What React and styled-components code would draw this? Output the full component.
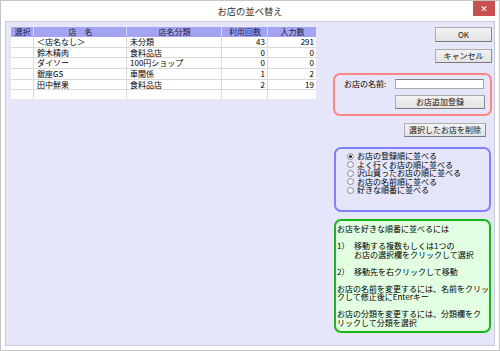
import React from "react";
import styled, { createGlobalStyle } from "styled-components";

const Global = createGlobalStyle`
  html, body { margin: 0; padding: 0; background: #fff; }
  body { font-family: "Noto Sans CJK JP", "Noto Sans", sans-serif; color: #000; }
`;

const Window = styled.div`
  width: 500px;
  height: 351px;
  box-sizing: border-box;
  border: 1px solid #c4c4c4;
  background: #fff;
  display: flex;
  flex-direction: column;
`;

const TitleBar = styled.div`
  height: 20px;
  display: grid;
  grid-template-columns: 1fr auto 1fr;
  align-items: center;
`;

const Title = styled.div`
  font-size: 9.3px;
  color: #333;
  line-height: 1;
  padding-top: 1px;
`;

const Close = styled.div`
  justify-self: end;
  align-self: start;
  width: 22px;
  height: 15px;
  margin-right: 4px;
  background: #c75050;
  color: #fff;
  font-family: "DejaVu Sans", sans-serif;
  font-size: 9px;
  font-weight: bold;
  display: flex;
  align-items: center;
  justify-content: center;
`;

const Panel = styled.div`
  flex: 1;
  margin: 0 4px 4px 4px;
  border: 1px solid #cbcbd9;
  background: #e6e6fa;
  display: flex;
  justify-content: space-between;
  align-items: flex-start;
  padding: 5px 2px 0 5px;
`;

const Grid = styled.div`
  width: 305px;
  background: #fff;
  display: grid;
  grid-template-columns: 23px 93px 95px 46px 48px;
  grid-template-rows: 10px repeat(5, 10.7px) 9px;
  font-size: 8px;
  line-height: 1;
`;

const Cell = styled.div`
  box-sizing: border-box;
  display: flex;
  align-items: center;
  justify-content: ${(p) => (p.$align === "right" ? "flex-end" : p.$align === "center" ? "center" : "flex-start")};
  padding: 0 2px 0 3px;
  white-space: nowrap;
  overflow: hidden;
  background: ${(p) => (p.$header ? "#a3a3f2" : "#fff")};
  color: ${(p) => (p.$header ? "#1a1a40" : "#000")};
  border-right: ${(p) => (p.$last ? "none" : p.$header ? "1px solid #d4d4ff" : "1px solid #dadada")};
  border-bottom: ${(p) => (p.$header || p.$end ? "none" : "1px solid #dadada")};
`;

const Side = styled.div`
  width: 159px;
  display: flex;
  flex-direction: column;
  align-items: flex-end;
`;

const Button = styled.div`
  box-sizing: border-box;
  width: ${(p) => p.$w}px;
  height: ${(p) => p.$h || 14}px;
  margin: ${(p) => p.$m || "0"};
  border: 1px solid #adadad;
  border-right-color: #8a8a8a;
  border-bottom-color: #7a7a7a;
  background: linear-gradient(#f2f2f2, #e3e3e3);
  font-size: 8px;
  line-height: 1;
  color: #111;
  display: flex;
  align-items: center;
  justify-content: center;
  white-space: nowrap;
`;

const Box = styled.div`
  box-sizing: border-box;
  align-self: stretch;
  height: ${(p) => p.$h}px;
  margin: ${(p) => p.$m || "0"};
  border: 2px solid ${(p) => p.$border};
  border-radius: 7px;
  background: ${(p) => p.$bg || "transparent"};
  padding: ${(p) => p.$pad || "0"};
  font-size: 8px;
  line-height: 8.5px;
`;

const NameGrid = styled.div`
  display: grid;
  grid-template-columns: 1fr 90px;
  row-gap: 6px;
  align-items: center;
`;

const Label = styled.div`
  white-space: nowrap;
`;

const Input = styled.div`
  box-sizing: border-box;
  width: 89px;
  height: 10px;
  background: #fff;
  border: 1px solid #a8a8a8;
  border-top-color: #7f7f7f;
`;

const RadioList = styled.div`
  display: flex;
  flex-direction: column;
`;

const RadioRow = styled.div`
  display: flex;
  align-items: center;
  height: 8.5px;
  white-space: nowrap;
`;

const RadioDot = styled.span`
  box-sizing: border-box;
  width: 7px;
  height: 7px;
  border-radius: 50%;
  border: 1px solid #8d8d8d;
  background: #f4f4f4;
  margin-right: 3px;
  display: flex;
  align-items: center;
  justify-content: center;
  &::after {
    content: "";
    width: 3px;
    height: 3px;
    border-radius: 50%;
    background: ${(p) => (p.$on ? "#222" : "transparent")};
  }
`;

const Para = styled.div`
  white-space: nowrap;
  & + & { margin-top: 8.5px; }
`;

const Step = styled.div`
  display: grid;
  grid-template-columns: 17px auto;
  white-space: nowrap;
`;

const rows = [
  ["＜店名なし＞", "未分類", 43, 291],
  ["鈴木精肉", "食料品店", 0, 0],
  ["ダイソー", "100円ショップ", 0, 0],
  ["銀座GS", "車関係", 1, 2],
  ["田中鮮果", "食料品店", 2, 19],
  ["", "", "", ""],
];

const radios = [
  "お店の登録順に並べる",
  "よく行くお店の順に並べる",
  "沢山買ったお店の順に並べる",
  "お店の名前順に並べる",
  "好きな順番に並べる",
];

export default function App() {
  return (
    <>
      <Global />
      <Window>
        <TitleBar>
          <span />
          <Title>お店の並べ替え</Title>
          <Close>✕</Close>
        </TitleBar>
        <Panel>
          <Grid>
            <Cell $header $align="center">選択</Cell>
            <Cell $header $align="center">店　名</Cell>
            <Cell $header $align="center">店名分類</Cell>
            <Cell $header $align="center">利用回数</Cell>
            <Cell $header $align="center" $last>入力数</Cell>
            {rows.map((r, i) => {
              const end = i === rows.length - 1;
              return (
                <React.Fragment key={i}>
                  <Cell $end={end} />
                  <Cell $end={end}>{r[0]}</Cell>
                  <Cell $end={end}>{r[1]}</Cell>
                  <Cell $end={end} $align="right">{r[2]}</Cell>
                  <Cell $end={end} $align="right" $last>{r[3]}</Cell>
                </React.Fragment>
              );
            })}
          </Grid>
          <Side>
            <Button $w={57} $h={15} $m="0 0 7px 0">OK</Button>
            <Button $w={57} $h={14} $m="0 0 10px 0">キャンセル</Button>
            <Box $h={43} $border="#ff8585" $pad="4px 5px 0 9px">
              <NameGrid>
                <Label>お店の名前:</Label>
                <Input />
                <span />
                <Button $w={90} $h={14}>お店追加登録</Button>
              </NameGrid>
            </Box>
            <Button $w={82} $h={14} $m="7px 6px 0 0">選択したお店を削除</Button>
            <Box $h={65} $m="10px 1px 0 1px" $border="#7f7fff" $pad="3px 0 0 11px">
              <RadioList>
                {radios.map((t, i) => (
                  <RadioRow key={t}>
                    <RadioDot $on={i === 0} />
                    {t}
                  </RadioRow>
                ))}
              </RadioList>
            </Box>
            <Box $h={114} $m="7px 1px 0 1px" $border="#16b816" $bg="#e2ffe2" $pad="4px 0 0 1px">
              <Para>お店を好きな順番に並べるには</Para>
              <Para>
                <Step>
                  <span>1）</span>
                  <span>移動する複数もしくは1つの<br />お店の選択欄をクリックして選択</span>
                </Step>
              </Para>
              <Para>
                <Step>
                  <span>2）</span>
                  <span>移動先を右クリックして移動</span>
                </Step>
              </Para>
              <Para>お店の名前を変更するには、名前をクリッ<br />クして修正後にEnterキー</Para>
              <Para>お店の分類を変更するには、分類欄をク<br />リックして分類を選択</Para>
            </Box>
          </Side>
        </Panel>
      </Window>
    </>
  );
}
